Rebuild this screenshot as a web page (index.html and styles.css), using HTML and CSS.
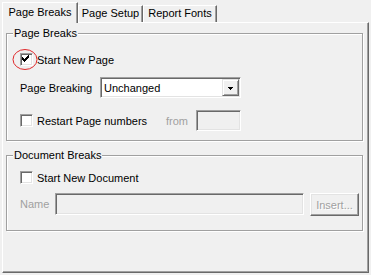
FILE: index.html
```html
<!DOCTYPE html>
<html lang="en">
<head>
  <meta charset="UTF-8" />
  <title>Report Options</title>
  <link rel="stylesheet" href="styles.css">
</head>
<body>
  <div class="dialog">
    <div class="tabs">
      <div class="tab tab-breaks active">Page Breaks</div>
      <div class="tab tab-setup">Page Setup</div>
      <div class="tab tab-fonts">Report Fonts</div>
    </div>

    <div class="panel">
      <!-- page breaks group -->
      <fieldset class="group group-page">
        <legend>Page Breaks</legend>
        <div class="group-body">
          <div class="row row-start">
            <span class="check">
              <svg class="tick" width="11" height="11" shape-rendering="crispEdges">
                <path d="M8 2h1v1h-1z M7 3h2v1h-2z M2 4h1v1h-1z M6 4h3v1h-3z M2 5h2v1h-2z M5 5h3v1h-3z M2 6h5v1h-5z M3 7h3v1h-3z M4 8h1v1h-1z" fill="#000"/>
              </svg>
              <svg class="mark" width="27" height="23">
                <ellipse cx="13" cy="11.5" rx="12" ry="10" fill="none" stroke="#e0292b" stroke-width="1"/>
              </svg>
            </span>
            <span class="check-label">Start New Page</span>
          </div>

          <div class="row row-breaking">
            <span class="field-label">Page Breaking</span>
            <div class="select">
              <span class="select-text">Unchanged</span>
              <span class="select-btn">
                <svg width="5" height="3" shape-rendering="crispEdges"><path d="M0 0H5V1H4V2H3V3H2V2H1V1H0Z" fill="#000"/></svg>
              </span>
            </div>
          </div>

          <div class="row row-restart">
            <div class="check-item">
              <span class="check"></span>
              <span class="check-label">Restart Page numbers</span>
            </div>
            <span class="field-label disabled from-label">from</span>
            <span class="input input-from"></span>
          </div>
        </div>
      </fieldset>

      <!-- document breaks group -->
      <fieldset class="group group-doc">
        <legend>Document Breaks</legend>
        <div class="group-body">
          <div class="row row-start">
            <span class="check"></span>
            <span class="check-label">Start New Document</span>
          </div>
          <div class="row row-name">
            <span class="field-label disabled name-label">Name</span>
            <span class="input input-name"></span>
            <button class="btn" disabled>Insert...</button>
          </div>
        </div>
      </fieldset>
    </div>
  </div>
</body>
</html>
```

FILE: styles.css
```css
body {
  margin: 0;
  background: #f0f0f0;
  font-family: "Liberation Sans", Arial, sans-serif;
  font-size: 11px;
  color: #000;
}

.dialog {
  padding: 2px 0 0 2px;
  width: 367px;
}

/* tabs */
.tabs {
  display: flex;
  align-items: flex-end;
  height: 20px;
  position: relative;
  z-index: 1;
}
.tab {
  box-sizing: border-box;
  height: 17px;
  line-height: 15px;
  text-align: center;
  background: #f0f0f0;
  border-top: 1px solid #fff;
  border-left: 1px solid #fff;
  border-right: 1px solid #696969;
  box-shadow: inset -1px 0 #a0a0a0;
}
.tab.active {
  height: 21px;
  margin-bottom: -1px;
  line-height: 18px;
}
.tab-breaks { width: 76px; }
.tab-setup { width: 65px; }
.tab-fonts { width: 74px; }

.panel {
  box-sizing: border-box;
  height: 251px;
  border: 1px solid;
  border-color: #fff #696969 #696969 #fff;
  box-shadow: inset -1px -1px #a0a0a0;
  padding: 4px 5px 0 3px;
}

/* group boxes */
.group {
  margin: 0;
  padding: 0;
  min-width: 0;
  border: 1px solid #a0a0a0;
  box-shadow: 1px 1px #fff, inset 1px 1px #fff;
}
.group legend {
  margin-left: 6px;
  padding: 0 1px;
  line-height: 13px;
  background: #f0f0f0;
}
.group-doc {
  margin-top: 8px;
}
.group-body {
  padding-left: 13px;
}
.group-page .group-body {
  padding-top: 13px;
  padding-bottom: 9px;
}
.group-doc .group-body {
  padding-top: 9px;
  padding-bottom: 14px;
}

.row {
  display: flex;
  align-items: center;
}
.row-start { height: 13px; }
.row-breaking { height: 21px; margin-top: 11px; }
.row-restart { height: 21px; margin-top: 12px; }
.row-name { height: 23px; margin-top: 9px; align-items: flex-start; }

/* checkboxes */
.check {
  position: relative;
  flex: none;
  box-sizing: border-box;
  width: 13px;
  height: 13px;
  background: #fff;
  border: 1px solid;
  border-color: #a0a0a0 #fff #fff #a0a0a0;
  box-shadow: inset 1px 1px #696969, inset -1px -1px #e3e3e3;
}
.tick {
  display: block;
  position: relative;
  margin: -1px;
}
.mark {
  position: absolute;
  left: -9px;
  top: -6px;
}
.check-label {
  margin-left: 4px;
  white-space: nowrap;
}
.check-item {
  display: flex;
  align-items: center;
  width: 146px;
}

.field-label {
  white-space: nowrap;
}
.disabled {
  color: #a0a0a0;
}
.row-breaking .field-label { width: 80px; }
.from-label { width: 30px; }
.name-label { width: 35px; line-height: 23px; }

/* dropdown */
.select {
  box-sizing: border-box;
  display: flex;
  align-items: center;
  width: 141px;
  height: 21px;
  padding: 1px;
  background: #fff;
  border: 1px solid;
  border-color: #a0a0a0 #fff #fff #a0a0a0;
  box-shadow: inset 1px 1px #696969, inset -1px -1px #e3e3e3;
}
.select-text {
  flex: 1;
  padding-left: 2px;
}
.select-btn {
  box-sizing: border-box;
  display: flex;
  align-items: center;
  justify-content: center;
  width: 17px;
  height: 17px;
  padding-top: 1px;
  background: #f0f0f0;
  border: 1px solid;
  border-color: #e3e3e3 #696969 #696969 #e3e3e3;
  box-shadow: inset 1px 1px #fff, inset -1px -1px #a0a0a0;
}
.select-btn svg { display: block; }

/* text boxes */
.input {
  box-sizing: border-box;
  display: block;
  background: #f0f0f0;
  border: 1px solid;
  border-color: #a0a0a0 #fff #fff #a0a0a0;
  box-shadow: inset 1px 1px #696969, inset -1px -1px #e3e3e3;
}
.input-from { width: 45px; height: 21px; }
.input-name { width: 249px; height: 22px; margin-right: 6px; }

.btn {
  box-sizing: border-box;
  width: 49px;
  height: 23px;
  padding: 0;
  font: inherit;
  color: #a0a0a0;
  text-shadow: 1px 1px #fff;
  background: #f0f0f0;
  border: 1px solid;
  border-color: #fff #696969 #696969 #fff;
  box-shadow: inset -1px -1px #a0a0a0, inset 1px 1px #e3e3e3;
}
```
